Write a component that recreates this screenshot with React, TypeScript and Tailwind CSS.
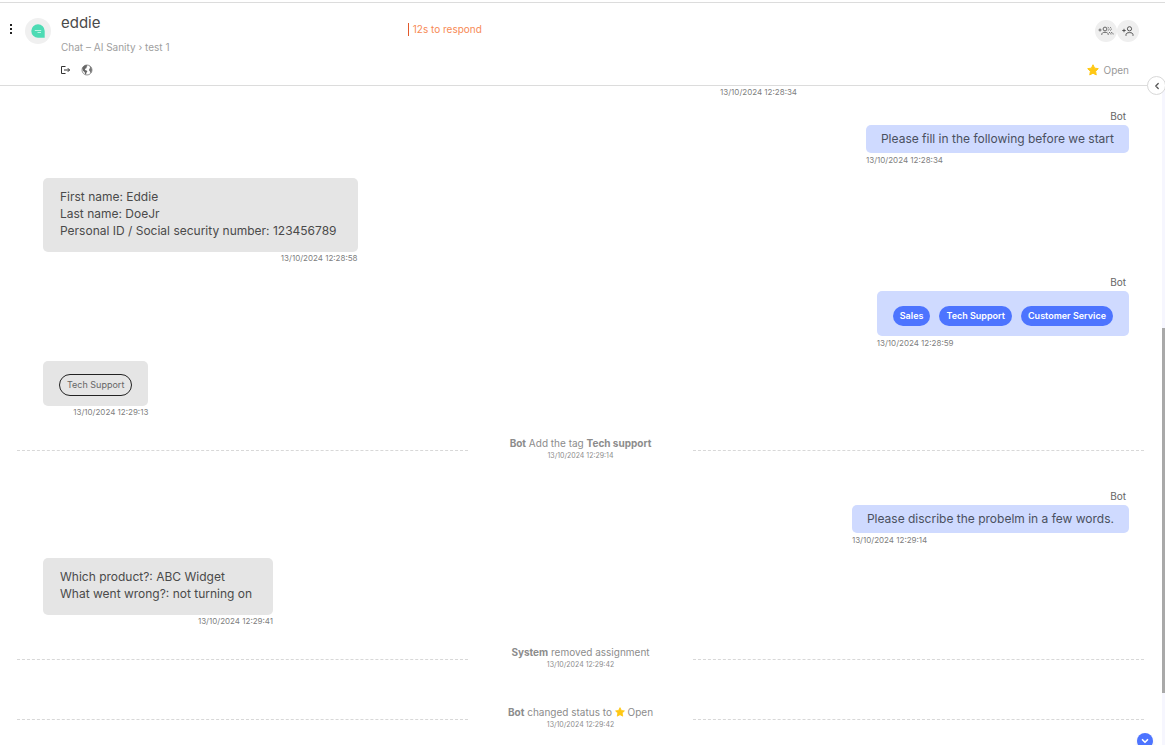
import type { ReactNode } from 'react'
import { ChevronDown, ChevronLeft } from 'lucide-react'

interface MessageProps {
  time: string
  children: ReactNode
}

function StarIcon({ className }: { className?: string }) {
  return (
    <svg viewBox="0 0 24 24" className={className} fill="#ffc814" stroke="#ffc814" strokeWidth="2" strokeLinejoin="round" aria-hidden="true">
      <path d="M12 1.5l3.2 6.8 7.4 1-5.4 5.2 1.3 7.4-6.5-3.6-6.5 3.6 1.3-7.4L1.4 9.3l7.4-1z" />
    </svg>
  )
}

function ChatLogo() {
  return (
    <svg viewBox="0 0 14 14" className="size-3.5" aria-hidden="true">
      <path d="M7 .3a6.7 6.7 0 1 0 0 13.4h6.7V7A6.7 6.7 0 0 0 7 .3z" fill="#4ddbb4" />
      <path d="M3.8 6.5h6.4M6.5 8.5H10" stroke="#c4f8e9" strokeWidth="0.9" />
    </svg>
  )
}

function ExitIcon() {
  return (
    <svg viewBox="0 0 10 10" className="size-2.5" fill="none" stroke="#333" strokeWidth="1" aria-hidden="true">
      <path d="M4.500 1.500H.5v7h4M3 5h5.500M6.800 3.200L8.600 5 6.800 6.800" />
    </svg>
  )
}

function GlobeIcon() {
  return (
    <svg viewBox="0 0 12 12" className="size-3" aria-hidden="true">
      <circle cx="6" cy="6" r="5" fill="#fff" stroke="#888" strokeWidth="0.9" />
      <path d="M1.3 4.2C2 2.3 3.7 1.2 5.6 1.1l.8 1-1 .9.3 1-1.5.8-.2 1.2 1.6.4.8 1.2-1 1.2-.3 1.8-1-.4-.4-2-1.7-1.5z" fill="#666" />
      <path d="M8.500 1.800l1.500 1.300 1 2.700-.7 2.600-1 .6-.3-1.500-1.100-1.200.4-1.500 1-.7-.5-1.100z" fill="#777" />
    </svg>
  )
}

function AddTeamIcon() {
  return (
    <svg viewBox="0 0 16 10" className="h-2.5 w-4" fill="none" stroke="#666" strokeWidth="1" aria-hidden="true">
      <path d="M.5 4h3M2 2.5v3" />
      <circle cx="7" cy="3" r="1.9" />
      <path d="M3.8 9V8.3C3.8 7 5 6.3 7 6.3s3.2.7 3.2 2V9" />
      <path d="M9.8 1.2a1.9 1.9 0 0 1 0 3.6M12 1.2a1.9 1.9 0 0 1 0 3.6M11 6.4c1.3.3 2 1 2 2V9M13.2 6.4c1.3.3 2 1 2 2V9" strokeDasharray="1.2 0.6" />
    </svg>
  )
}

function AddPersonIcon() {
  return (
    <svg viewBox="0 0 12 10" className="h-2.5 w-3" fill="none" stroke="#555" strokeWidth="1" aria-hidden="true">
      <path d="M.3 4.5h3.4M2 2.8v3.4" />
      <circle cx="7.5" cy="2.8" r="2.1" />
      <path d="M4 9.8V8.6c0-1.3 1.4-2 3.5-2s3.5.7 3.5 2v1.2" />
    </svg>
  )
}

function Header() {
  return (
    <header className="relative mt-0.5 grid shrink-0 grid-cols-[35%_1fr_auto] border-y border-[#dcdcdc] pt-3 pb-[7px]">
      {/* Contact */}
      <div className="flex items-start">
        <button type="button" aria-label="Menu" className="flex w-[21px] flex-col items-center gap-0.5 pt-[9px]">
          <span className="size-0.5 bg-[#222]" />
          <span className="size-0.5 bg-[#222]" />
          <span className="size-0.5 bg-[#222]" />
        </button>
        <div className="ml-1 mt-[3px] flex size-[26px] items-center justify-center rounded-full bg-[#f0f0f0]">
          <ChatLogo />
        </div>
        <div className="ml-2.5">
          <h1 className="text-[15px] leading-4 text-[#4a4a4a]">eddie</h1>
          <p className="mt-2 text-[10px] leading-4 text-[#a0a0a0]">Chat – AI Sanity › test 1</p>
          <div className="mt-[9px] flex items-center gap-2.5">
            <button type="button" aria-label="Leave chat"><ExitIcon /></button>
            <button type="button" aria-label="Website"><GlobeIcon /></button>
          </div>
        </div>
      </div>

      {/* Response timer */}
      <div className="pt-2">
        <p className="border-l border-[#e2592b] pl-1 text-[10px] leading-[13px] text-[#f78a55]">12s to respond</p>
      </div>

      {/* Assignment and status */}
      <div className="flex flex-col items-end pt-[5px]">
        <div className="mr-[26px] flex">
          <button type="button" aria-label="Assign team" className="flex size-[22px] items-center justify-center rounded-full bg-[#efefef]">
            <AddTeamIcon />
          </button>
          <button type="button" aria-label="Assign agent" className="flex size-[22px] items-center justify-center rounded-full bg-[#efefef]">
            <AddPersonIcon />
          </button>
        </div>
        <div className="mt-5 mr-9 flex items-center gap-1 text-[10px] leading-4 text-[#999]">
          <StarIcon className="size-3" />
          Open
        </div>
      </div>

      <button type="button" aria-label="Open side panel" className="absolute -bottom-2.5 -right-px z-10 flex size-[19px] items-center justify-center rounded-full border border-[#d8d8d8] bg-white">
        <ChevronLeft className="size-2.5 text-[#555]" strokeWidth={3} />
      </button>
    </header>
  )
}

function BotMessage({ time, children }: MessageProps) {
  return (
    <div className="mt-2 mr-9 flex flex-col items-end">
      <span className="pr-[3px] text-[10px] leading-[18px] text-[#666]">Bot</span>
      <div>
        <div className="rounded-[5px] bg-[#cfdaff] text-[12px] leading-[18px] text-[#4a5060]">{children}</div>
        <time className="block text-[8px] leading-3.5 text-[#808080]">{time}</time>
      </div>
    </div>
  )
}

function GuestMessage({ time, children }: MessageProps) {
  return (
    <div className="mt-[11px] ml-[43px] flex">
      <div>
        <div className="rounded-[5px] bg-[#e5e5e5] text-[12px] leading-[17px] text-[#4a4a4a]">{children}</div>
        <time className="block text-right text-[8px] leading-[13px] text-[#808080]">{time}</time>
      </div>
    </div>
  )
}

function EventRow({ time, children }: MessageProps) {
  return (
    <div className="my-[17px] ml-[17px] mr-[21px] flex h-[26px]">
      <div className="mt-3.5 flex-1 border-t border-dashed border-[#d8d8d8]" />
      <div className="w-[225px] text-center text-[#8c8c8c]">
        <p className="text-[10px] leading-3.5">{children}</p>
        <time className="block text-[7px] leading-3">{time}</time>
      </div>
      <div className="mt-3.5 flex-1 border-t border-dashed border-[#d8d8d8]" />
    </div>
  )
}

export default function App() {
  const options = ['Sales', 'Tech Support', 'Customer Service']

  return (
    <div className="relative flex h-screen flex-col overflow-hidden bg-white font-['Inter',sans-serif]">
      <Header />

      <div className="flex min-h-0 flex-1">
        <main className="flex min-w-0 flex-1 flex-col overflow-hidden">
          <time className="mr-9 w-[409px] shrink-0 self-end text-[8px] leading-[13px] text-[#808080]">13/10/2024 12:28:34</time>

          <BotMessage time="13/10/2024 12:28:34">
            <p className="px-[15px] py-[5px]">Please fill in the following before we start</p>
          </BotMessage>

          <GuestMessage time="13/10/2024 12:28:58">
            <div className="pt-2.5 pr-[21px] pb-[13px] pl-[17px]">
              <p>First name: Eddie</p>
              <p>Last name: DoeJr</p>
              <p>Personal ID / Social security number: 123456789</p>
            </div>
          </GuestMessage>

          <BotMessage time="13/10/2024 12:28:59">
            <div className="flex gap-[9px] px-4 pt-[15px] pb-2.5">
              {options.map((option) => (
                <button key={option} type="button" className="h-5 rounded-full bg-[#4d74ff] px-[7px] text-[9px] font-semibold leading-[18px] text-white">
                  {option}
                </button>
              ))}
            </div>
          </BotMessage>

          <GuestMessage time="13/10/2024 12:29:13">
            <div className="px-4 pt-[13px] pb-2.5">
              <button type="button" className="block h-[22px] rounded-full border border-[#222] px-[7px] text-[9px] leading-[18px] text-[#666]">
                Tech Support
              </button>
            </div>
          </GuestMessage>

          <EventRow time="13/10/2024 12:29:14">
            <b>Bot</b> Add the tag <b>Tech support</b>
          </EventRow>

          <BotMessage time="13/10/2024 12:29:14">
            <p className="px-[15px] py-[5px]">Please discribe the probelm in a few words.</p>
          </BotMessage>

          <GuestMessage time="13/10/2024 12:29:41">
            <div className="pt-2.5 pr-[21px] pb-[13px] pl-[17px]">
              <p>Which product?: ABC Widget</p>
              <p>What went wrong?: not turning on</p>
            </div>
          </GuestMessage>

          <EventRow time="13/10/2024 12:29:42">
            <b>System</b> removed assignment
          </EventRow>
          <EventRow time="13/10/2024 12:29:42">
            <b>Bot</b> changed status to <StarIcon className="inline size-2.5 align-[-1px]" /> Open
          </EventRow>
        </main>

        {/* Scrollbar */}
        <div className="flex w-[3px] -ml-[3px] flex-col bg-[#f6f6fe]">
          <div className="grow-[242]" />
          <div className="grow-[365] bg-[#a9a9a9]" />
          <div className="grow-[52]" />
        </div>
      </div>

      <button type="button" aria-label="Scroll to latest" className="absolute -bottom-1 right-3 flex size-4 items-center justify-center rounded-full bg-[#4d74ff] shadow-md">
        <ChevronDown className="size-2.5 text-white" strokeWidth={4} />
      </button>
    </div>
  )
}
